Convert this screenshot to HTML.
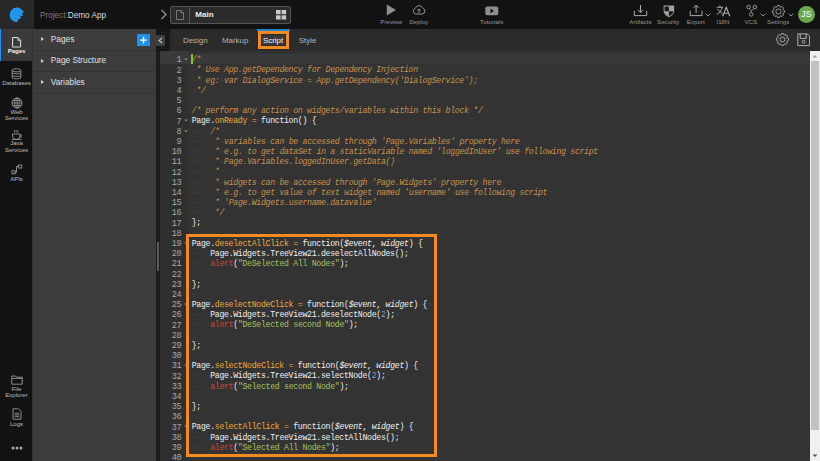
<!DOCTYPE html>
<html><head><meta charset="utf-8">
<style>
*{margin:0;padding:0;box-sizing:border-box}
html,body{width:820px;height:461px;overflow:hidden;background:#121212;font-family:"Liberation Sans",sans-serif}
.abs{position:absolute}
#top{left:0;top:0;width:820px;height:29px;background:#121212}
#logo{left:0;top:0;width:34px;height:29px;background:#282828}
#side{left:0;top:29px;width:32px;height:432px;background:#121212}
.sitem{position:absolute;left:0.5px;width:32px;text-align:center;color:#bdbdbd;font-size:6px;line-height:6.3px}
.sitem svg{display:block;margin:0 auto}
#panel{left:32px;top:29px;width:124px;height:432px;background:#3c3c3c;border-left:1.5px solid #333}
.prow{position:absolute;left:0;width:122.5px;height:21.5px;border-bottom:1px solid #333;color:#e0e0e0;font-size:8.3px}
.prow .tri{position:absolute;left:7.6px;top:8px;width:0;height:0;border-left:3.5px solid #d0d0d0;border-top:2.5px solid transparent;border-bottom:2.5px solid transparent}
.prow .t{position:absolute;left:17.8px;top:5.5px;line-height:9px}
#tabbar{left:156px;top:29px;width:664px;height:22px;background:#2b2b2b}
.tab{position:absolute;top:36px;font-size:7.9px;color:#b5b5b5;line-height:9px}
#divider{left:156px;top:51px;width:4px;height:410px;background:#1c1c1c}
#gutter{left:160px;top:51px;width:29px;height:410px;background:#2f2f2f}
#editor{left:189px;top:51px;width:621px;height:410px;background:#333333}
.gn{position:absolute;right:8px;width:28px;text-align:right;font-family:"Liberation Mono",monospace;font-size:8.6px;letter-spacing:-0.55px;line-height:10.2px;height:10.2px;color:#a8a8a8;margin-top:1.9px}
.ln{position:absolute;left:2.7px;white-space:pre;font-family:"Liberation Mono",monospace;font-size:8.2px;letter-spacing:-0.3px;line-height:10.2px;height:10.2px;color:#e8e8e8;margin-top:1.5px}
.c{color:#c8924a;font-style:italic}
.d{color:#f0f0f0}
.m{color:#f2a83a}
.o{color:#f2a83a}
.k{color:#f0f0f0}
.p{color:#f0f0f0;font-style:italic}
.a{color:#d2452c}
.s{color:#a5c25c}
.n{color:#7b9fd6}
.i{color:#4a4a4a}
.e{color:#404040}
#scroll{left:810px;top:51px;width:10px;height:410px;background:#f0f0f0}
.lbl{position:absolute;width:60px;text-align:center;font-size:6.2px;color:#969696;line-height:7px;white-space:nowrap}
</style></head>
<body>
<div id="top" class="abs"></div>
<div id="logo" class="abs">
  <svg width="33" height="29" viewBox="0 0 33 29" style="position:absolute;left:0;top:0">
    <path d="M9.7 15 A7.2 7.2 0 0 1 16.8 7.4 C19.8 7.4 22.6 9.4 24.1 12.6 L21.9 12.7 C22.6 13.6 22.8 14.7 22.6 15.9 L20.4 15.7 C20.9 16.8 20.8 17.9 20.2 19.1 L18.1 18.9 C18.2 20.1 17.9 21.2 17.1 22.3 C12.9 21.9 9.7 18.9 9.7 15 Z" fill="#1f97ee"/>
    <path d="M12 12.5 C14 11 17.5 10.8 20 12 M11.8 15.5 C13.5 14.2 16.8 14.2 19 15.3" stroke="#1a7fc8" stroke-width="0.5" fill="none" opacity="0.6"/>
  </svg>
</div>
<div class="abs" style="left:40px;top:9.5px;font-size:8.2px;line-height:11px;white-space:nowrap"><span style="color:#7d7d7d">Project:</span><span style="color:#dcdcdc">Demo App</span></div>

<!-- breadcrumb -->
<svg class="abs" style="left:160px;top:9px" width="8" height="11" viewBox="0 0 8 11"><path d="M1.5 1 L6 5.5 L1.5 10" stroke="#9aa0a6" stroke-width="1.1" fill="none"/></svg>
<div class="abs" style="left:170px;top:6px;width:120.5px;height:18px;border:1px solid #555;border-radius:2px;background:#2b2b2b"></div>
<div class="abs" style="left:189px;top:7px;width:1px;height:16px;background:#555"></div>
<svg class="abs" style="left:175px;top:9px" width="10" height="12" viewBox="0 0 10 12"><path d="M1.5 1.5 H6 L8.5 4 V10.5 H1.5 Z M6 1.5 V4 H8.5" stroke="#8a8a8a" stroke-width="0.8" fill="none"/></svg>
<div class="abs" style="left:195.3px;top:9.5px;font-size:8px;line-height:10px;font-weight:bold;color:#f0f0f0">Main</div>
<svg class="abs" style="left:276px;top:10px" width="11" height="10" viewBox="0 0 11 10">
  <rect x="0" y="0" width="4.6" height="4.2" fill="#c8c8c8"/><rect x="5.6" y="0" width="4.6" height="4.2" fill="#c8c8c8"/>
  <rect x="0" y="5.3" width="4.6" height="4.2" fill="#c8c8c8"/><rect x="5.6" y="5.3" width="4.6" height="4.2" fill="#c8c8c8"/>
</svg>

<!-- top toolbar -->
<svg class="abs" style="left:386px;top:4px" width="11" height="12" viewBox="0 0 11 12"><path d="M0.8 0.6 L10 6 L0.8 11.4 Z" fill="#8a8f94"/></svg>
<div class="lbl" style="left:361.3px;top:17.9px">Preview</div>
<svg class="abs" style="left:412px;top:4px" width="14" height="12" viewBox="0 0 14 12"><path d="M3.5 10 H10.5 A3 3 0 0 0 10.8 4.2 A4 4 0 0 0 3.2 4.6 A2.8 2.8 0 0 0 3.5 10 Z" stroke="#a0a0a0" stroke-width="0.9" fill="none"/><path d="M7 9 V5 M5.3 6.6 L7 4.9 L8.7 6.6" stroke="#a0a0a0" stroke-width="0.9" fill="none"/></svg>
<div class="lbl" style="left:388.8px;top:17.9px">Deploy</div>
<svg class="abs" style="left:485px;top:6px" width="14" height="10" viewBox="0 0 14 10"><rect x="0.3" y="0.5" width="13" height="8.8" rx="2" fill="#8f8f8f"/><path d="M5.5 2.6 L9 4.9 L5.5 7.2 Z" fill="#121212"/></svg>
<div class="lbl" style="left:461.5px;top:17.9px">Tutorials</div>

<svg class="abs" style="left:633px;top:4px" width="15" height="13" viewBox="0 0 15 13"><path d="M1.3 6.8 V11.6 H13.7 V6.8" stroke="#a8a8a8" stroke-width="1" fill="none"/><path d="M7.5 1 V8.6 M4.9 6 L7.5 8.6 L10.1 6" stroke="#a8a8a8" stroke-width="1" fill="none"/></svg>
<div class="lbl" style="left:610.5px;top:17.9px">Artifacts</div>
<svg class="abs" style="left:662.5px;top:4.5px" width="12" height="13" viewBox="0 0 12 13"><path d="M0.6 0.6 H11.2 V5.8 C11.2 8.8 9 10.8 5.9 12.2 C2.8 10.8 0.6 8.8 0.6 5.8 Z" fill="#a0a0a0"/><path d="M1.6 1.6 H5.9 V6.2 H1.6 Z" fill="#181818"/><path d="M5.9 6.2 H10.2 C10.1 8.3 8.6 9.9 5.9 11.1 Z" fill="#181818"/></svg>
<div class="lbl" style="left:638.2px;top:17.9px">Security</div>
<svg class="abs" style="left:688.5px;top:4px" width="14" height="13" viewBox="0 0 14 13"><path d="M1.2 6.8 V11.6 H13 V6.8" stroke="#a8a8a8" stroke-width="1" fill="none"/><path d="M7.1 9.2 V1.2 M4.5 3.8 L7.1 1.2 L9.7 3.8" stroke="#a8a8a8" stroke-width="1" fill="none"/></svg>
<svg class="abs" style="left:704.5px;top:13px" width="6" height="4" viewBox="0 0 6 4"><path d="M0.6 0.6 L3 3 L5.4 0.6" stroke="#a0a0a0" stroke-width="0.9" fill="none"/></svg>
<div class="lbl" style="left:665.7px;top:17.9px">Export</div>
<svg class="abs" style="left:716px;top:4.5px" width="15" height="12" viewBox="0 0 15 12"><path d="M0.8 2.3 H7 M3.9 0.3 V2.3 M1.3 4.2 C3 5.5 4.8 7.5 6.8 9.2 M6.2 2.3 C5.6 5.5 3.8 8 0.8 9.4" stroke="#b0b0b0" stroke-width="0.95" fill="none"/><path d="M6.8 11.2 L10.2 2.2 L13.8 11.2 M8.1 8.2 H12.5" stroke="#b0b0b0" stroke-width="1.05" fill="none"/></svg>
<div class="lbl" style="left:693.0px;top:17.9px">I18N</div>
<svg class="abs" style="left:744.5px;top:3.5px" width="13" height="13" viewBox="0 0 13 13"><circle cx="3.6" cy="3" r="1.8" stroke="#a8a8a8" stroke-width="0.85" fill="none"/><circle cx="9.9" cy="3" r="1.8" stroke="#a8a8a8" stroke-width="0.85" fill="none"/><circle cx="6.2" cy="10.4" r="1.8" stroke="#a8a8a8" stroke-width="0.85" fill="none"/><path d="M4.4 4.6 C5 6 6.2 6.2 6.2 7.2 V8.6 M9.1 4.6 C8.5 5.8 6.4 6 6.2 7.2" stroke="#a8a8a8" stroke-width="0.85" fill="none"/></svg>
<svg class="abs" style="left:760px;top:13px" width="6" height="4" viewBox="0 0 6 4"><path d="M0.6 0.6 L3 3 L5.4 0.6" stroke="#a0a0a0" stroke-width="0.9" fill="none"/></svg>
<div class="lbl" style="left:720.8px;top:17.9px">VCS</div>
<svg class="abs" style="left:771.2px;top:3.6px" width="15" height="15" viewBox="0 0 15 15"><path d="M6.08 2.81 L6.55 1.48 L8.45 1.48 L8.92 2.81 L9.81 3.18 L11.09 2.56 L12.44 3.91 L11.82 5.19 L12.19 6.08 L13.52 6.55 L13.52 8.45 L12.19 8.92 L11.82 9.81 L12.44 11.09 L11.09 12.44 L9.81 11.82 L8.92 12.19 L8.45 13.52 L6.55 13.52 L6.08 12.19 L5.19 11.82 L3.91 12.44 L2.56 11.09 L3.18 9.81 L2.81 8.92 L1.48 8.45 L1.48 6.55 L2.81 6.08 L3.18 5.19 L2.56 3.91 L3.91 2.56 L5.19 3.18 Z" stroke="#a8a8a8" stroke-width="0.9" stroke-linejoin="round" fill="none"/><circle cx="7.5" cy="7.5" r="2.6" stroke="#a8a8a8" stroke-width="0.9" fill="none"/></svg>
<svg class="abs" style="left:787.5px;top:13px" width="6" height="4" viewBox="0 0 6 4"><path d="M0.6 0.6 L3 3 L5.4 0.6" stroke="#a0a0a0" stroke-width="0.9" fill="none"/></svg>
<div class="lbl" style="left:748.2px;top:17.9px">Settings</div>
<div class="abs" style="left:798px;top:6.3px;width:16.8px;height:16.8px;border-radius:50%;background:#6ba74f;color:#fff;font-size:8.8px;line-height:16.8px;text-align:center">JS</div>

<!-- sidebar -->
<div id="side" class="abs"></div>
<div class="abs" style="left:0;top:29px;width:32px;height:32px;background:#3a3a3a"></div>
<div class="abs" style="left:0;top:29px;width:1.3px;height:32px;background:#1e90ff"></div>
<div class="sitem" style="top:36px;color:#f5f5f5;font-weight:bold">
  <svg width="11" height="12" viewBox="0 0 11 12"><path d="M1.6 10.6 V1.5 H6.8 L9.6 4.3 V10.6" stroke="#e6e6e6" stroke-width="1" stroke-linejoin="round" fill="none"/><path d="M6.8 1.5 V4.3 H9.6" stroke="#e6e6e6" stroke-width="0.8" fill="none"/><path d="M1.2 11 H9.9" stroke="#b5b5b5" stroke-width="1.3"/></svg>
  <div style="margin-top:-0.2px">Pages</div>
</div>
<div class="sitem" style="top:67.8px">
  <svg width="11" height="12" viewBox="0 0 11 12"><ellipse cx="5.5" cy="2.3" rx="4.3" ry="1.6" stroke="#a8a8a8" stroke-width="0.8" fill="none"/><path d="M1.2 2.3 V10 C1.2 11 9.8 11 9.8 10 V2.3 M1.2 5 C1.2 6 9.8 6 9.8 5 M1.2 7.6 C1.2 8.6 9.8 8.6 9.8 7.6" stroke="#a8a8a8" stroke-width="0.8" fill="none"/></svg>
  <div style="margin-top:0px">Databases</div>
</div>
<div class="sitem" style="top:97px">
  <svg width="12" height="12" viewBox="0 0 12 12"><circle cx="6" cy="6" r="5" stroke="#a8a8a8" stroke-width="0.8" fill="none"/><ellipse cx="6" cy="6" rx="2.2" ry="5" stroke="#a8a8a8" stroke-width="0.7" fill="none"/><path d="M1 6 H11 M1.7 3.5 H10.3 M1.7 8.5 H10.3 M6 1 V11" stroke="#a8a8a8" stroke-width="0.7"/></svg>
  <div style="margin-top:-0.5px">Web<br>Services</div>
</div>
<div class="sitem" style="top:129px">
  <svg width="12" height="11" viewBox="0 0 12 11"><path d="M1.5 5 H9 V7 A3.7 3.5 0 0 1 1.5 7 Z" stroke="#a8a8a8" stroke-width="0.8" fill="none"/><path d="M9 5.5 A1.5 1.5 0 0 1 9 8.5" stroke="#a8a8a8" stroke-width="0.8" fill="none"/><path d="M0.5 10.5 H10.5 M3.5 1 V3.5 M5.2 1 V3.5 M6.9 1 V3.5" stroke="#a8a8a8" stroke-width="0.7"/></svg>
  <div style="margin-top:0.3px">Java<br>Services</div>
</div>
<div class="sitem" style="top:164px">
  <svg width="12" height="11" viewBox="0 0 12 11"><rect x="1" y="6.8" width="3.2" height="3" stroke="#a8a8a8" stroke-width="0.8" fill="none"/><rect x="7.6" y="1" width="3.2" height="3" stroke="#a8a8a8" stroke-width="0.8" fill="none"/><path d="M4.2 8.3 H5.5 V2.5 H7.6" stroke="#a8a8a8" stroke-width="0.8" fill="none"/></svg>
  <div style="margin-top:1px">APIs</div>
</div>
<div class="sitem" style="top:375px">
  <svg width="12" height="10" viewBox="0 0 12 10"><path d="M0.8 1 H4.5 L5.5 2.2 H11.2 V9.2 H0.8 Z M0.8 3.4 H11.2" stroke="#a8a8a8" stroke-width="0.8" fill="none"/></svg>
  <div style="margin-top:1px">File<br>Explorer</div>
</div>
<div class="sitem" style="top:407.5px">
  <svg width="10" height="12" viewBox="0 0 10 12"><path d="M1 0.8 H6.5 L9 3.3 V11.2 H1 Z M2.6 5.3 H7.4 M2.6 7 H7.4 M2.6 8.7 H7.4" stroke="#a8a8a8" stroke-width="0.8" fill="none"/></svg>
  <div style="margin-top:1.5px">Logs</div>
</div>
<svg class="abs" style="left:10.5px;top:445.5px" width="12" height="4" viewBox="0 0 12 4"><circle cx="2" cy="2" r="1.5" fill="#a8a8a8"/><circle cx="6" cy="2" r="1.5" fill="#a8a8a8"/><circle cx="10" cy="2" r="1.5" fill="#a8a8a8"/></svg>

<!-- left panel -->
<div id="panel" class="abs">
  <div class="prow" style="top:0"><span class="tri"></span><span class="t">Pages</span></div>
  <div class="prow" style="top:21.5px"><span class="tri"></span><span class="t">Page Structure</span></div>
  <div class="prow" style="top:43px"><span class="tri"></span><span class="t">Variables</span></div>
</div>
<div class="abs" style="left:137.2px;top:34px;width:13px;height:12.2px;background:#1e90f0"></div>
<svg class="abs" style="left:137.2px;top:34px" width="13" height="12.2" viewBox="0 0 13 12.2"><path d="M6.5 2.8 V9.4 M3.2 6.1 H9.8" stroke="#fff" stroke-width="1.4"/></svg>

<!-- tab bar -->
<div id="tabbar" class="abs"></div>
<div class="abs" style="left:156px;top:29px;width:14.2px;height:22px;background:#161616"></div>
<div class="abs" style="left:160.5px;top:31.5px;width:8.5px;height:17px;border:1px dotted #252525"></div>
<div class="abs" style="left:156px;top:35px;width:9px;height:10.8px;background:#3d3d3d"></div>
<svg class="abs" style="left:156px;top:35px" width="9" height="11" viewBox="0 0 9 11"><path d="M6.3 2.8 L3 5.4 L6.3 8" stroke="#d0d0d0" stroke-width="1.05" fill="none"/></svg>
<div class="tab" style="left:183px">Design</div>
<div class="tab" style="left:222px">Markup</div>
<div class="abs" style="left:257px;top:29px;width:33px;height:2px;background:#1e88d0"></div>
<div class="abs" style="left:257.6px;top:30.9px;width:31.7px;height:18.3px;border:3.5px solid #f58a1f;background:#383838;box-shadow:inset 0 0 0 0.7px #262626"></div>
<div class="tab" style="left:263px;color:#f5f5f5">Script</div>
<div class="tab" style="left:298.8px">Style</div>
<svg class="abs" style="left:774.6px;top:31.9px" width="15" height="15" viewBox="0 0 15 15"><path d="M6.08 2.81 L6.55 1.48 L8.45 1.48 L8.92 2.81 L9.81 3.18 L11.09 2.56 L12.44 3.91 L11.82 5.19 L12.19 6.08 L13.52 6.55 L13.52 8.45 L12.19 8.92 L11.82 9.81 L12.44 11.09 L11.09 12.44 L9.81 11.82 L8.92 12.19 L8.45 13.52 L6.55 13.52 L6.08 12.19 L5.19 11.82 L3.91 12.44 L2.56 11.09 L3.18 9.81 L2.81 8.92 L1.48 8.45 L1.48 6.55 L2.81 6.08 L3.18 5.19 L2.56 3.91 L3.91 2.56 L5.19 3.18 Z" stroke="#b0b0b0" stroke-width="0.9" stroke-linejoin="round" fill="none"/><circle cx="7.5" cy="7.5" r="2.4" stroke="#b0b0b0" stroke-width="0.9" fill="none"/></svg>
<svg class="abs" style="left:796.8px;top:33px" width="13.5" height="13.5" viewBox="0 0 13.5 13.5"><path d="M0.8 0.9 H10.2 L12.6 3.3 V12.6 H0.8 Z" stroke="#b0b0b0" stroke-width="1" stroke-linejoin="round" fill="none"/><path d="M3.2 0.9 V5.4 H9.2 V0.9" stroke="#b0b0b0" stroke-width="1" fill="none"/><circle cx="6.6" cy="8.8" r="1.5" stroke="#b0b0b0" stroke-width="0.9" fill="none"/></svg>

<!-- editor -->
<div id="divider" class="abs"></div>
<div class="abs" style="left:157px;top:242px;width:1.5px;height:29px;background:#5a5a5a"></div>
<div id="gutter" class="abs">
  <div class="abs" style="left:0;top:0;width:29px;height:12.8px;background:#3a3a3a"></div>
  <div style="position:absolute;left:0;top:-51px;width:29px">
<div class="gn" style="top:53.60px">1</div>
<svg style="position:absolute;left:23.5px;top:58.20px" width="4" height="3" viewBox="0 0 4 3"><path d="M0.2 0.4 H3.8 L2 2.6 Z" fill="#8a8a8a"/></svg>
<div class="gn" style="top:63.80px">2</div>
<div class="gn" style="top:74.00px">3</div>
<div class="gn" style="top:84.20px">4</div>
<div class="gn" style="top:94.40px">5</div>
<div class="gn" style="top:104.60px">6</div>
<div class="gn" style="top:114.80px">7</div>
<svg style="position:absolute;left:23.5px;top:119.40px" width="4" height="3" viewBox="0 0 4 3"><path d="M0.2 0.4 H3.8 L2 2.6 Z" fill="#8a8a8a"/></svg>
<div class="gn" style="top:125.00px">8</div>
<svg style="position:absolute;left:23.5px;top:129.60px" width="4" height="3" viewBox="0 0 4 3"><path d="M0.2 0.4 H3.8 L2 2.6 Z" fill="#8a8a8a"/></svg>
<div class="gn" style="top:135.20px">9</div>
<div class="gn" style="top:145.40px">10</div>
<div class="gn" style="top:155.60px">11</div>
<div class="gn" style="top:165.80px">12</div>
<div class="gn" style="top:176.00px">13</div>
<div class="gn" style="top:186.20px">14</div>
<div class="gn" style="top:196.40px">15</div>
<div class="gn" style="top:206.60px">16</div>
<div class="gn" style="top:216.80px">17</div>
<div class="gn" style="top:227.00px">18</div>
<div class="gn" style="top:237.20px">19</div>
<svg style="position:absolute;left:23.5px;top:241.80px" width="4" height="3" viewBox="0 0 4 3"><path d="M0.2 0.4 H3.8 L2 2.6 Z" fill="#8a8a8a"/></svg>
<div class="gn" style="top:247.40px">20</div>
<div class="gn" style="top:257.60px">21</div>
<div class="gn" style="top:267.80px">22</div>
<div class="gn" style="top:278.00px">23</div>
<div class="gn" style="top:288.20px">24</div>
<div class="gn" style="top:298.40px">25</div>
<svg style="position:absolute;left:23.5px;top:303.00px" width="4" height="3" viewBox="0 0 4 3"><path d="M0.2 0.4 H3.8 L2 2.6 Z" fill="#8a8a8a"/></svg>
<div class="gn" style="top:308.60px">26</div>
<div class="gn" style="top:318.80px">27</div>
<div class="gn" style="top:329.00px">28</div>
<div class="gn" style="top:339.20px">29</div>
<div class="gn" style="top:349.40px">30</div>
<div class="gn" style="top:359.60px">31</div>
<svg style="position:absolute;left:23.5px;top:364.20px" width="4" height="3" viewBox="0 0 4 3"><path d="M0.2 0.4 H3.8 L2 2.6 Z" fill="#8a8a8a"/></svg>
<div class="gn" style="top:369.80px">32</div>
<div class="gn" style="top:380.00px">33</div>
<div class="gn" style="top:390.20px">34</div>
<div class="gn" style="top:400.40px">35</div>
<div class="gn" style="top:410.60px">36</div>
<div class="gn" style="top:420.80px">37</div>
<svg style="position:absolute;left:23.5px;top:425.40px" width="4" height="3" viewBox="0 0 4 3"><path d="M0.2 0.4 H3.8 L2 2.6 Z" fill="#8a8a8a"/></svg>
<div class="gn" style="top:431.00px">38</div>
<div class="gn" style="top:441.20px">39</div>
<div class="gn" style="top:451.40px">40</div>
  </div>
</div>
<div id="editor" class="abs">
  <div class="abs" style="left:0;top:0;width:621px;height:2.7px;background:#313131"></div>
  <div class="abs" style="left:0;top:2.7px;width:621px;height:10.7px;background:#38393a"></div>
  <div class="abs" style="left:1.9px;top:2.8px;width:2.1px;height:10.4px;background:#7cd10f"></div>
  <div style="position:absolute;left:0;top:-51px;width:621px">
<div class="ln" style="top:53.60px"><span class="c">/*</span><span class="e">¬</span></div>
<div class="ln" style="top:63.80px"><span class="i">·</span><span class="c">*</span><span class="i">·</span><span class="c">Use</span><span class="i">·</span><span class="c">App.getDependency</span><span class="i">·</span><span class="c">for</span><span class="i">·</span><span class="c">Dependency</span><span class="i">·</span><span class="c">Injection</span><span class="e">¬</span></div>
<div class="ln" style="top:74.00px"><span class="i">·</span><span class="c">*</span><span class="i">·</span><span class="c">eg:</span><span class="i">·</span><span class="c">var</span><span class="i">·</span><span class="c">DialogService</span><span class="i">·</span><span class="c">=</span><span class="i">·</span><span class="c">App.getDependency(&#x27;DialogService&#x27;);</span><span class="e">¬</span></div>
<div class="ln" style="top:84.20px"><span class="i">·</span><span class="c">*/</span><span class="e">¬</span></div>
<div class="ln" style="top:94.40px"><span class="e">¬</span></div>
<div class="ln" style="top:104.60px"><span class="c">/*</span><span class="i">·</span><span class="c">perform</span><span class="i">·</span><span class="c">any</span><span class="i">·</span><span class="c">action</span><span class="i">·</span><span class="c">on</span><span class="i">·</span><span class="c">widgets/variables</span><span class="i">·</span><span class="c">within</span><span class="i">·</span><span class="c">this</span><span class="i">·</span><span class="c">block</span><span class="i">·</span><span class="c">*/</span><span class="e">¬</span></div>
<div class="ln" style="top:114.80px"><span class="d">Page.</span><span class="m">onReady</span><span class="i">·</span><span class="o">=</span><span class="i">·</span><span class="k">function</span><span class="d">()</span><span class="i">·</span><span class="d">{</span><span class="e">¬</span></div>
<div class="ln" style="top:125.00px"><span class="i">·</span><span class="i">·</span><span class="i">·</span><span class="i">·</span><span class="c">/*</span><span class="e">¬</span></div>
<div class="ln" style="top:135.20px"><span class="i">·</span><span class="i">·</span><span class="i">·</span><span class="i">·</span><span class="i">·</span><span class="c">*</span><span class="i">·</span><span class="c">variables</span><span class="i">·</span><span class="c">can</span><span class="i">·</span><span class="c">be</span><span class="i">·</span><span class="c">accessed</span><span class="i">·</span><span class="c">through</span><span class="i">·</span><span class="c">&#x27;Page.Variables&#x27;</span><span class="i">·</span><span class="c">property</span><span class="i">·</span><span class="c">here</span><span class="e">¬</span></div>
<div class="ln" style="top:145.40px"><span class="i">·</span><span class="i">·</span><span class="i">·</span><span class="i">·</span><span class="i">·</span><span class="c">*</span><span class="i">·</span><span class="c">e.g.</span><span class="i">·</span><span class="c">to</span><span class="i">·</span><span class="c">get</span><span class="i">·</span><span class="c">dataSet</span><span class="i">·</span><span class="c">in</span><span class="i">·</span><span class="c">a</span><span class="i">·</span><span class="c">staticVariable</span><span class="i">·</span><span class="c">named</span><span class="i">·</span><span class="c">&#x27;loggedInUser&#x27;</span><span class="i">·</span><span class="c">use</span><span class="i">·</span><span class="c">following</span><span class="i">·</span><span class="c">script</span><span class="e">¬</span></div>
<div class="ln" style="top:155.60px"><span class="i">·</span><span class="i">·</span><span class="i">·</span><span class="i">·</span><span class="i">·</span><span class="c">*</span><span class="i">·</span><span class="c">Page.Variables.loggedInUser.getData()</span><span class="e">¬</span></div>
<div class="ln" style="top:165.80px"><span class="i">·</span><span class="i">·</span><span class="i">·</span><span class="i">·</span><span class="i">·</span><span class="c">*</span><span class="e">¬</span></div>
<div class="ln" style="top:176.00px"><span class="i">·</span><span class="i">·</span><span class="i">·</span><span class="i">·</span><span class="i">·</span><span class="c">*</span><span class="i">·</span><span class="c">widgets</span><span class="i">·</span><span class="c">can</span><span class="i">·</span><span class="c">be</span><span class="i">·</span><span class="c">accessed</span><span class="i">·</span><span class="c">through</span><span class="i">·</span><span class="c">&#x27;Page.Widgets&#x27;</span><span class="i">·</span><span class="c">property</span><span class="i">·</span><span class="c">here</span><span class="e">¬</span></div>
<div class="ln" style="top:186.20px"><span class="i">·</span><span class="i">·</span><span class="i">·</span><span class="i">·</span><span class="i">·</span><span class="c">*</span><span class="i">·</span><span class="c">e.g.</span><span class="i">·</span><span class="c">to</span><span class="i">·</span><span class="c">get</span><span class="i">·</span><span class="c">value</span><span class="i">·</span><span class="c">of</span><span class="i">·</span><span class="c">text</span><span class="i">·</span><span class="c">widget</span><span class="i">·</span><span class="c">named</span><span class="i">·</span><span class="c">&#x27;username&#x27;</span><span class="i">·</span><span class="c">use</span><span class="i">·</span><span class="c">following</span><span class="i">·</span><span class="c">script</span><span class="e">¬</span></div>
<div class="ln" style="top:196.40px"><span class="i">·</span><span class="i">·</span><span class="i">·</span><span class="i">·</span><span class="i">·</span><span class="c">*</span><span class="i">·</span><span class="c">&#x27;Page.Widgets.username.datavalue&#x27;</span><span class="e">¬</span></div>
<div class="ln" style="top:206.60px"><span class="i">·</span><span class="i">·</span><span class="i">·</span><span class="i">·</span><span class="i">·</span><span class="c">*/</span><span class="e">¬</span></div>
<div class="ln" style="top:216.80px"><span class="d">};</span><span class="e">¬</span></div>
<div class="ln" style="top:227.00px"><span class="e">¬</span></div>
<div class="ln" style="top:237.20px"><span class="d">Page.</span><span class="m">deselectAllClick</span><span class="i">·</span><span class="o">=</span><span class="i">·</span><span class="k">function</span><span class="d">(</span><span class="p">$event</span><span class="d">,</span><span class="i">·</span><span class="p">widget</span><span class="d">)</span><span class="i">·</span><span class="d">{</span><span class="e">¬</span></div>
<div class="ln" style="top:247.40px"><span class="i">·</span><span class="i">·</span><span class="i">·</span><span class="i">·</span><span class="d">Page.Widgets.TreeView21.deselectAllNodes();</span><span class="e">¬</span></div>
<div class="ln" style="top:257.60px"><span class="i">·</span><span class="i">·</span><span class="i">·</span><span class="i">·</span><span class="a">alert</span><span class="d">(</span><span class="s">&quot;DeSelected</span><span class="i">·</span><span class="s">All</span><span class="i">·</span><span class="s">Nodes&quot;</span><span class="d">);</span><span class="e">¬</span></div>
<div class="ln" style="top:267.80px"><span class="e">¬</span></div>
<div class="ln" style="top:278.00px"><span class="d">};</span><span class="e">¬</span></div>
<div class="ln" style="top:288.20px"><span class="e">¬</span></div>
<div class="ln" style="top:298.40px"><span class="d">Page.</span><span class="m">deselectNodeClick</span><span class="i">·</span><span class="o">=</span><span class="i">·</span><span class="k">function</span><span class="d">(</span><span class="p">$event</span><span class="d">,</span><span class="i">·</span><span class="p">widget</span><span class="d">)</span><span class="i">·</span><span class="d">{</span><span class="e">¬</span></div>
<div class="ln" style="top:308.60px"><span class="i">·</span><span class="i">·</span><span class="i">·</span><span class="i">·</span><span class="d">Page.Widgets.TreeView21.deselectNode(</span><span class="n">2</span><span class="d">);</span><span class="e">¬</span></div>
<div class="ln" style="top:318.80px"><span class="i">·</span><span class="i">·</span><span class="i">·</span><span class="i">·</span><span class="a">alert</span><span class="d">(</span><span class="s">&quot;DeSelected</span><span class="i">·</span><span class="s">second</span><span class="i">·</span><span class="s">Node&quot;</span><span class="d">);</span><span class="e">¬</span></div>
<div class="ln" style="top:329.00px"><span class="e">¬</span></div>
<div class="ln" style="top:339.20px"><span class="d">};</span><span class="e">¬</span></div>
<div class="ln" style="top:349.40px"><span class="e">¬</span></div>
<div class="ln" style="top:359.60px"><span class="d">Page.</span><span class="m">selectNodeClick</span><span class="i">·</span><span class="o">=</span><span class="i">·</span><span class="k">function</span><span class="d">(</span><span class="p">$event</span><span class="d">,</span><span class="i">·</span><span class="p">widget</span><span class="d">)</span><span class="i">·</span><span class="d">{</span><span class="e">¬</span></div>
<div class="ln" style="top:369.80px"><span class="i">·</span><span class="i">·</span><span class="i">·</span><span class="i">·</span><span class="d">Page.Widgets.TreeView21.selectNode(</span><span class="n">2</span><span class="d">);</span><span class="e">¬</span></div>
<div class="ln" style="top:380.00px"><span class="i">·</span><span class="i">·</span><span class="i">·</span><span class="i">·</span><span class="a">alert</span><span class="d">(</span><span class="s">&quot;Selected</span><span class="i">·</span><span class="s">second</span><span class="i">·</span><span class="s">Node&quot;</span><span class="d">);</span><span class="e">¬</span></div>
<div class="ln" style="top:390.20px"><span class="e">¬</span></div>
<div class="ln" style="top:400.40px"><span class="d">};</span><span class="e">¬</span></div>
<div class="ln" style="top:410.60px"><span class="e">¬</span></div>
<div class="ln" style="top:420.80px"><span class="d">Page.</span><span class="m">selectAllClick</span><span class="i">·</span><span class="o">=</span><span class="i">·</span><span class="k">function</span><span class="d">(</span><span class="p">$event</span><span class="d">,</span><span class="i">·</span><span class="p">widget</span><span class="d">)</span><span class="i">·</span><span class="d">{</span><span class="e">¬</span></div>
<div class="ln" style="top:431.00px"><span class="i">·</span><span class="i">·</span><span class="i">·</span><span class="i">·</span><span class="d">Page.Widgets.TreeView21.selectAllNodes();</span><span class="e">¬</span></div>
<div class="ln" style="top:441.20px"><span class="i">·</span><span class="i">·</span><span class="i">·</span><span class="i">·</span><span class="a">alert</span><span class="d">(</span><span class="s">&quot;Selected</span><span class="i">·</span><span class="s">All</span><span class="i">·</span><span class="s">Nodes&quot;</span><span class="d">);</span><span class="e">¬</span></div>
<div class="ln" style="top:451.40px"><span class="e">¬</span></div>
  </div>
</div>
<div class="abs" style="left:185.7px;top:234.1px;width:251.5px;height:223.1px;border:3.2px solid #f58a1f"></div>

<!-- scrollbar -->
<div id="scroll" class="abs"></div>
<div class="abs" style="left:811px;top:61px;width:8px;height:369px;background:#c1c1c1"></div>
<svg class="abs" style="left:811px;top:53px" width="8" height="6" viewBox="0 0 8 6"><path d="M1.5 4.5 L4 2 L6.5 4.5 Z" fill="#a3a3a3"/></svg>
<svg class="abs" style="left:811px;top:453px" width="8" height="6" viewBox="0 0 8 6"><path d="M1.5 1.5 L4 4 L6.5 1.5 Z" fill="#505050"/></svg>
</body></html>
